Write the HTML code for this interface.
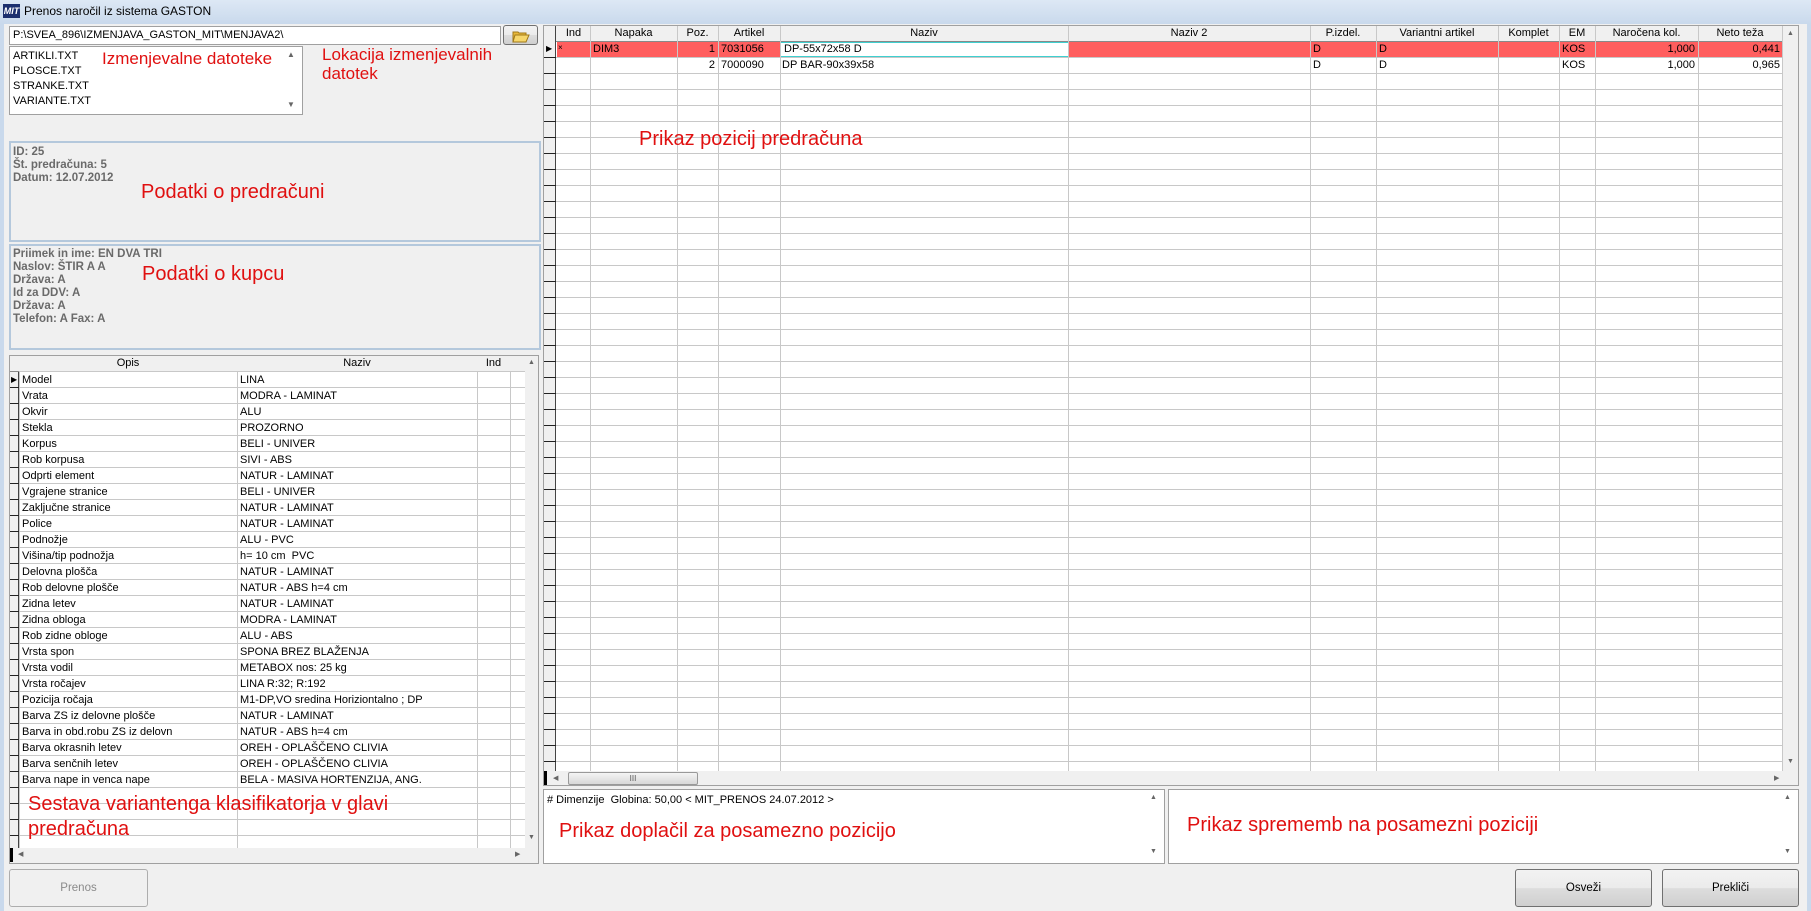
<!DOCTYPE html>
<html><head><meta charset="utf-8"><style>
*{box-sizing:border-box;margin:0;padding:0}
body{width:1811px;height:911px;overflow:hidden;background:#f0f0f0;font-family:"Liberation Sans",sans-serif;font-size:11px;color:#000;position:relative}
.a{position:absolute}
.red{color:#e01010;font-size:20px;white-space:nowrap}
.box{position:absolute;background:#fff;border:1px solid #a0a0a0}
.grp{position:absolute;border:2px solid #b4c8dc;background:#f0f0f0}
.gt{color:#6a6a6a;font-weight:bold;font-size:11.5px;line-height:13px;white-space:nowrap}
.btn{position:absolute;border:1px solid #707070;border-radius:3px;background:linear-gradient(#f2f2f2 0%,#ebebeb 50%,#dddddd 51%,#cfcfcf 100%);text-align:center;font-size:11.5px}
.vl{position:absolute;width:1px;background:#c8c8c8}
.hd{position:absolute;top:0;height:15px;line-height:15px;text-align:center;font-size:11px;white-space:nowrap;overflow:hidden}
.t{position:absolute;height:16px;line-height:16px;font-size:11px;white-space:nowrap;overflow:hidden}
table{border-collapse:collapse;table-layout:fixed}
td{height:16px;border:1px solid #c8c8c8;padding:0 2px;font-size:11px;line-height:14px;white-space:nowrap;overflow:hidden}
</style></head><body>
<div class="a" style="left:0;top:0;width:1811px;height:24px;background:linear-gradient(#dde8f5,#c9d9ec)"></div>
<div class="a" style="left:3px;top:4px;width:17px;height:14px;background:#1c2f6e;color:#fff;font-size:9px;font-weight:bold;line-height:14px;text-align:center;font-style:italic">MIT</div>
<div class="a" style="left:24px;top:4px;font-size:12px;line-height:15px">Prenos naročil iz sistema GASTON</div>
<div class="a" style="left:0;top:24px;width:4px;height:887px;background:#c9d9ec"></div>
<div class="a" style="right:0;top:24px;width:4px;height:887px;background:#c9d9ec"></div>

<div class="box" style="left:9px;top:26px;width:492px;height:19px;padding:2px 3px;font-size:11px">P:\SVEA_896\IZMENJAVA_GASTON_MIT\MENJAVA2\</div>
<div class="btn" style="left:503px;top:25px;width:35px;height:20px"><svg width="18" height="14" viewBox="0 0 18 14" style="margin-top:3px"><path d="M1 3h5l1 1h7v9H1z" fill="#e8b83a" stroke="#a07818"/><path d="M3 6h14l-3 7H1z" fill="#f6d66a" stroke="#a07818"/></svg></div>

<div class="box" style="left:9px;top:46px;width:294px;height:69px;padding:2px 3px;line-height:15px">ARTIKLI.TXT<br>PLOSCE.TXT<br>STRANKE.TXT<br>VARIANTE.TXT</div>
<div class="a" style="left:287px;top:50px;font-size:8px;color:#666">▲</div>
<div class="a" style="left:287px;top:100px;font-size:8px;color:#666">▼</div>
<div class="a red" style="left:102px;top:49px;font-size:17px">Izmenjevalne datoteke</div>
<div class="a red" style="left:322px;top:45px;font-size:17px;line-height:19px">Lokacija izmenjevalnih<br>datotek</div>

<div class="grp" style="left:9px;top:141px;width:532px;height:101px"></div>
<div class="a gt" style="left:13px;top:146px">ID: 25<br>Št. predračuna: 5<br>Datum: 12.07.2012</div>
<div class="a red" style="left:141px;top:181px">Podatki o predračuni</div>

<div class="grp" style="left:9px;top:244px;width:532px;height:106px"></div>
<div class="a gt" style="left:13px;top:248px">Priimek in ime: EN DVA TRI<br>Naslov: ŠTIR A A<br>Država: A<br>Id za DDV: A<br>Država: A<br>Telefon: A Fax: A</div>
<div class="a red" style="left:142px;top:263px">Podatki o kupcu</div>

<div class="a" style="left:9px;top:355px;width:530px;height:509px;background:#fff;border:1px solid #a0a0a0;overflow:hidden">
 <div class="a" style="left:0;top:0;width:9px;height:509px;background:#f0f0f0;border-right:1px solid #444"></div>
 <div class="a" style="left:0;top:0;width:515px;height:16px;background:#f0f0f0;border-bottom:1px solid #888"></div>
 <div class="hd" style="left:9px;width:218px">Opis</div>
 <div class="hd" style="left:227px;width:240px">Naziv</div>
 <div class="hd" style="left:467px;width:33px">Ind</div>
 <table class="a" style="left:9px;top:15px;width:506px">
 <colgroup><col style="width:218px"><col style="width:240px"><col style="width:33px"><col style="width:15px"></colgroup>
 <tr><td>Model</td><td>LINA</td><td></td><td></td></tr>
 <tr><td>Vrata</td><td>MODRA - LAMINAT</td><td></td><td></td></tr>
 <tr><td>Okvir</td><td>ALU</td><td></td><td></td></tr>
 <tr><td>Stekla</td><td>PROZORNO</td><td></td><td></td></tr>
 <tr><td>Korpus</td><td>BELI - UNIVER</td><td></td><td></td></tr>
 <tr><td>Rob korpusa</td><td>SIVI - ABS</td><td></td><td></td></tr>
 <tr><td>Odprti element</td><td>NATUR - LAMINAT</td><td></td><td></td></tr>
 <tr><td>Vgrajene stranice</td><td>BELI - UNIVER</td><td></td><td></td></tr>
 <tr><td>Zaključne stranice</td><td>NATUR - LAMINAT</td><td></td><td></td></tr>
 <tr><td>Police</td><td>NATUR - LAMINAT</td><td></td><td></td></tr>
 <tr><td>Podnožje</td><td>ALU - PVC</td><td></td><td></td></tr>
 <tr><td>Višina/tip podnožja</td><td>h= 10 cm&nbsp; PVC</td><td></td><td></td></tr>
 <tr><td>Delovna plošča</td><td>NATUR - LAMINAT</td><td></td><td></td></tr>
 <tr><td>Rob delovne plošče</td><td>NATUR - ABS h=4 cm</td><td></td><td></td></tr>
 <tr><td>Zidna letev</td><td>NATUR - LAMINAT</td><td></td><td></td></tr>
 <tr><td>Zidna obloga</td><td>MODRA - LAMINAT</td><td></td><td></td></tr>
 <tr><td>Rob zidne obloge</td><td>ALU - ABS</td><td></td><td></td></tr>
 <tr><td>Vrsta spon</td><td>SPONA BREZ BLAŽENJA</td><td></td><td></td></tr>
 <tr><td>Vrsta vodil</td><td>METABOX nos: 25 kg</td><td></td><td></td></tr>
 <tr><td>Vrsta ročajev</td><td>LINA R:32; R:192</td><td></td><td></td></tr>
 <tr><td>Pozicija ročaja</td><td>M1-DP,VO sredina Horiziontalno ; DP</td><td></td><td></td></tr>
 <tr><td>Barva ZS iz delovne plošče</td><td>NATUR - LAMINAT</td><td></td><td></td></tr>
 <tr><td>Barva in obd.robu ZS iz delovn</td><td>NATUR - ABS h=4 cm</td><td></td><td></td></tr>
 <tr><td>Barva okrasnih letev</td><td>OREH - OPLAŠČENO CLIVIA</td><td></td><td></td></tr>
 <tr><td>Barva senčnih letev</td><td>OREH - OPLAŠČENO CLIVIA</td><td></td><td></td></tr>
 <tr><td>Barva nape in venca nape</td><td>BELA - MASIVA HORTENZIJA, ANG.</td><td></td><td></td></tr>
 <tr><td></td><td></td><td></td><td></td></tr>
 <tr><td></td><td></td><td></td><td></td></tr>
 <tr><td></td><td></td><td></td><td></td></tr>
 <tr><td></td><td></td><td></td><td></td></tr>
 </table>
 <div class="a" style="left:0;top:16px;width:9px;height:480px;background:repeating-linear-gradient(transparent 0 15px,#222 15px 16px)"></div>
 <div class="a" style="left:1px;top:19px;font-size:8px">▶</div>
 <div class="a" style="left:515px;top:0;width:14px;height:492px;background:#f0f0f0"></div>
 <div class="a" style="left:518px;top:3px;font-size:7px;color:#666">▲</div>
 <div class="a" style="left:518px;top:478px;font-size:7px;color:#666">▼</div>
 <div class="a" style="left:0;top:492px;width:530px;height:16px;background:#f0f0f0"></div>
 <div class="a" style="left:0;top:492px;width:3px;height:14px;background:#000"></div>
 <div class="a" style="left:8px;top:494px;font-size:7px;color:#666">◀</div>
 <div class="a" style="left:505px;top:494px;font-size:7px;color:#666">▶</div>
</div>
<div class="a red" style="left:28px;top:792px;line-height:25px">Sestava variantenga klasifikatorja v glavi<br>predračuna</div>

<div class="a" style="left:543px;top:25px;width:1256px;height:761px;background:#fff;border:1px solid #a0a0a0;overflow:hidden">
 <div class="a" style="left:0;top:0;width:1239px;height:16px;background:#f0f0f0;border-bottom:1px solid #888"></div>
 <div class="a" style="left:0;top:0;width:12px;height:745px;background:#f0f0f0;border-right:1px solid #444"></div>
 <div class="a" style="left:12px;top:16px;width:1227px;height:729px;background:repeating-linear-gradient(transparent 0 15px,#c8c8c8 15px 16px)"></div>
 <div class="a" style="left:0;top:16px;width:12px;height:729px;background:repeating-linear-gradient(transparent 0 15px,#222 15px 16px)"></div>
 <div class="a" style="left:13px;top:16px;width:1226px;height:15px;background:#ff5e5e"></div>
 <div class="a" style="left:236px;top:16px;width:289px;height:15px;background:#fff;border:1px solid #3fd0d0"></div>
 <div class="vl" style="left:46px;top:0;height:745px"></div>
 <div class="vl" style="left:133px;top:0;height:745px"></div>
 <div class="vl" style="left:174px;top:0;height:745px"></div>
 <div class="vl" style="left:236px;top:0;height:745px"></div>
 <div class="vl" style="left:524px;top:0;height:745px"></div>
 <div class="vl" style="left:766px;top:0;height:745px"></div>
 <div class="vl" style="left:832px;top:0;height:745px"></div>
 <div class="vl" style="left:954px;top:0;height:745px"></div>
 <div class="vl" style="left:1015px;top:0;height:745px"></div>
 <div class="vl" style="left:1051px;top:0;height:745px"></div>
 <div class="vl" style="left:1154px;top:0;height:745px"></div>
 <div class="vl" style="left:1238px;top:0;height:745px"></div>
 <div class="hd" style="left:13px;width:33px">Ind</div>
 <div class="hd" style="left:46px;width:87px">Napaka</div>
 <div class="hd" style="left:133px;width:41px">Poz.</div>
 <div class="hd" style="left:174px;width:62px">Artikel</div>
 <div class="hd" style="left:236px;width:288px">Naziv</div>
 <div class="hd" style="left:524px;width:242px">Naziv 2</div>
 <div class="hd" style="left:766px;width:66px">P.izdel.</div>
 <div class="hd" style="left:832px;width:122px">Variantni artikel</div>
 <div class="hd" style="left:954px;width:61px">Komplet</div>
 <div class="hd" style="left:1015px;width:36px">EM</div>
 <div class="hd" style="left:1051px;width:103px">Naročena kol.</div>
 <div class="hd" style="left:1154px;width:84px">Neto teža</div>
 <div class="a" style="left:2px;top:18px;font-size:8px">▶</div>
 <div class="t" style="left:14px;top:14px;font-size:8px">×</div>
 <div class="t" style="left:49px;top:15px">DIM3</div>
 <div class="t" style="left:133px;top:15px;width:38px;text-align:right">1</div>
 <div class="t" style="left:177px;top:15px">7031056</div>
 <div class="t" style="left:240px;top:15px">DP-55x72x58 D</div>
 <div class="t" style="left:769px;top:15px">D</div>
 <div class="t" style="left:835px;top:15px">D</div>
 <div class="t" style="left:1018px;top:15px">KOS</div>
 <div class="t" style="left:1051px;top:15px;width:100px;text-align:right">1,000</div>
 <div class="t" style="left:1154px;top:15px;width:82px;text-align:right">0,441</div>
 <div class="t" style="left:133px;top:31px;width:38px;text-align:right">2</div>
 <div class="t" style="left:177px;top:31px">7000090</div>
 <div class="t" style="left:238px;top:31px">DP BAR-90x39x58</div>
 <div class="t" style="left:769px;top:31px">D</div>
 <div class="t" style="left:835px;top:31px">D</div>
 <div class="t" style="left:1018px;top:31px">KOS</div>
 <div class="t" style="left:1051px;top:31px;width:100px;text-align:right">1,000</div>
 <div class="t" style="left:1154px;top:31px;width:82px;text-align:right">0,965</div>
 <div class="a" style="left:1239px;top:0;width:16px;height:745px;background:#f0f0f0"></div>
 <div class="a" style="left:1243px;top:4px;font-size:7px;color:#666">▲</div>
 <div class="a" style="left:1243px;top:732px;font-size:7px;color:#666">▼</div>
 <div class="a" style="left:0;top:745px;width:1256px;height:16px;background:#f0f0f0"></div>
 <div class="a" style="left:0;top:745px;width:3px;height:15px;background:#000"></div>
 <div class="a" style="left:9px;top:748px;font-size:7px;color:#666">◀</div>
 <div class="a" style="left:24px;top:746px;width:130px;height:13px;border:1px solid #999;border-radius:2px;background:linear-gradient(#f4f4f4,#d8d8d8);text-align:center;font-size:8px;line-height:11px;color:#555">III</div>
 <div class="a" style="left:1230px;top:748px;font-size:7px;color:#666">▶</div>
</div>
<div class="a red" style="left:639px;top:128px">Prikaz pozicij predračuna</div>

<div class="box" style="left:543px;top:789px;width:622px;height:75px"></div>
<div class="a" style="left:547px;top:794px;font-size:11px">#&nbsp;Dimenzije&nbsp; Globina: 50,00 &lt; MIT_PRENOS 24.07.2012 &gt;</div>
<div class="a" style="left:1150px;top:794px;font-size:7px;color:#666">▲</div>
<div class="a" style="left:1150px;top:848px;font-size:7px;color:#666">▼</div>
<div class="a red" style="left:559px;top:820px">Prikaz doplačil za posamezno pozicijo</div>
<div class="box" style="left:1168px;top:789px;width:631px;height:75px"></div>
<div class="a" style="left:1784px;top:794px;font-size:7px;color:#666">▲</div>
<div class="a" style="left:1784px;top:848px;font-size:7px;color:#666">▼</div>
<div class="a red" style="left:1187px;top:814px">Prikaz sprememb na posamezni poziciji</div>

<div class="a" style="left:9px;top:869px;width:139px;height:38px;border:1px solid #adadad;border-radius:3px;background:#f0f0f0;color:#8a8a8a;text-align:center;line-height:36px;font-size:11.5px">Prenos</div>
<div class="btn" style="left:1515px;top:869px;width:137px;height:38px;line-height:36px">Osveži</div>
<div class="btn" style="left:1662px;top:869px;width:137px;height:38px;line-height:36px">Prekliči</div>
</body></html>
